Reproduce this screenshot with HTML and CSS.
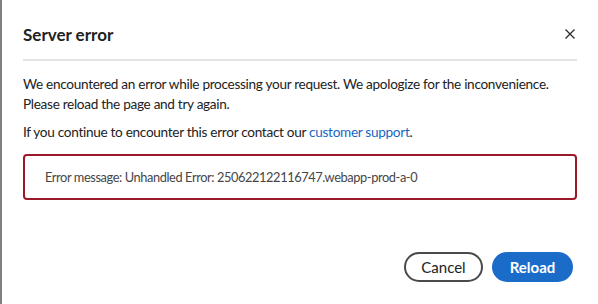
FILE: index.html
```html
<!DOCTYPE html>
<html lang="en">
<head>
<meta charset="utf-8">
<title>Server error</title>
<link rel="stylesheet" href="styles.css">
</head>
<body>
<div class="dialog">
  <header class="head">
    <h2 class="title">Server error</h2>
    <button class="close" aria-label="Close">
      <svg width="10" height="10" viewBox="0 0 10 10"><path d="M0.5 0.5L9.5 9.5M9.5 0.5L0.5 9.5" stroke="#2c2c2c" stroke-width="1.3" fill="none"/></svg>
    </button>
  </header>
  <div class="divider"></div>
  <div class="content">
    <p class="para">We encountered an error while processing your request. We apologize for the inconvenience. Please reload the page and try again.</p>
    <p class="para">If you continue to encounter this error contact our <a class="link" href="#">customer support</a>.</p>
    <div class="errbox">Error message: Unhandled Error: 250622122116747.webapp-prod-a-0</div>
  </div>
  <footer class="actions">
    <button class="btn btn-secondary">Cancel</button>
    <button class="btn btn-primary">Reload</button>
  </footer>
</div>
</body>
</html>
```

FILE: styles.css
```css
* { box-sizing: border-box; }
html, body { margin: 0; padding: 0; background: #fff; }
body {
  font-family: "Lato", "Open Sans", sans-serif;
  color: #222;
}
.dialog {
  width: 598px;
  height: 304px;
  border-left: 2px solid #808080;
  padding: 0 21px 0 21px;
  display: flex;
  flex-direction: column;
}
.head {
  display: flex;
  align-items: center;
  justify-content: space-between;
  height: 59px;
  padding-top: 9px;
}
.title {
  margin: 0;
  font-size: 17px;
  font-weight: 700;
  color: #222;
}
.close {
  border: 0;
  background: none;
  padding: 0;
  width: 12px;
  height: 12px;
  display: flex;
  align-items: center;
  justify-content: center;
  margin-right: 1px;
}
.divider {
  height: 2px;
  background: #e4e4e4;
}
.content {
  padding-top: 13px;
}
.para {
  margin: 0 0 8px;
  font-size: 13.6px;
  letter-spacing: -0.3px;
  line-height: 20px;
}
.link {
  color: #1667c4;
  text-decoration: none;
}
.errbox {
  margin-top: 12px;
  height: 46px;
  border: 2px solid #9a1b27;
  border-radius: 4px;
  padding: 0 20px;
  display: flex;
  align-items: center;
  font-size: 12.8px;
  letter-spacing: -0.4px;
  color: #464646;
}
.actions {
  margin-top: auto;
  margin-bottom: 22px;
  display: flex;
  justify-content: flex-end;
  gap: 9px;
  padding-right: 4px;
}
.btn {
  height: 30px;
  border-radius: 15px;
  font-family: inherit;
  font-size: 15px;
  padding: 0 12px;
}
.btn-secondary {
  width: 79px;
  background: #fff;
  border: 2px solid #4a4a4a;
  color: #222;
}
.btn-primary {
  width: 81px;
  background: #1b6cc8;
  border: 0;
  color: #fff;
  font-weight: 700;
}
```
